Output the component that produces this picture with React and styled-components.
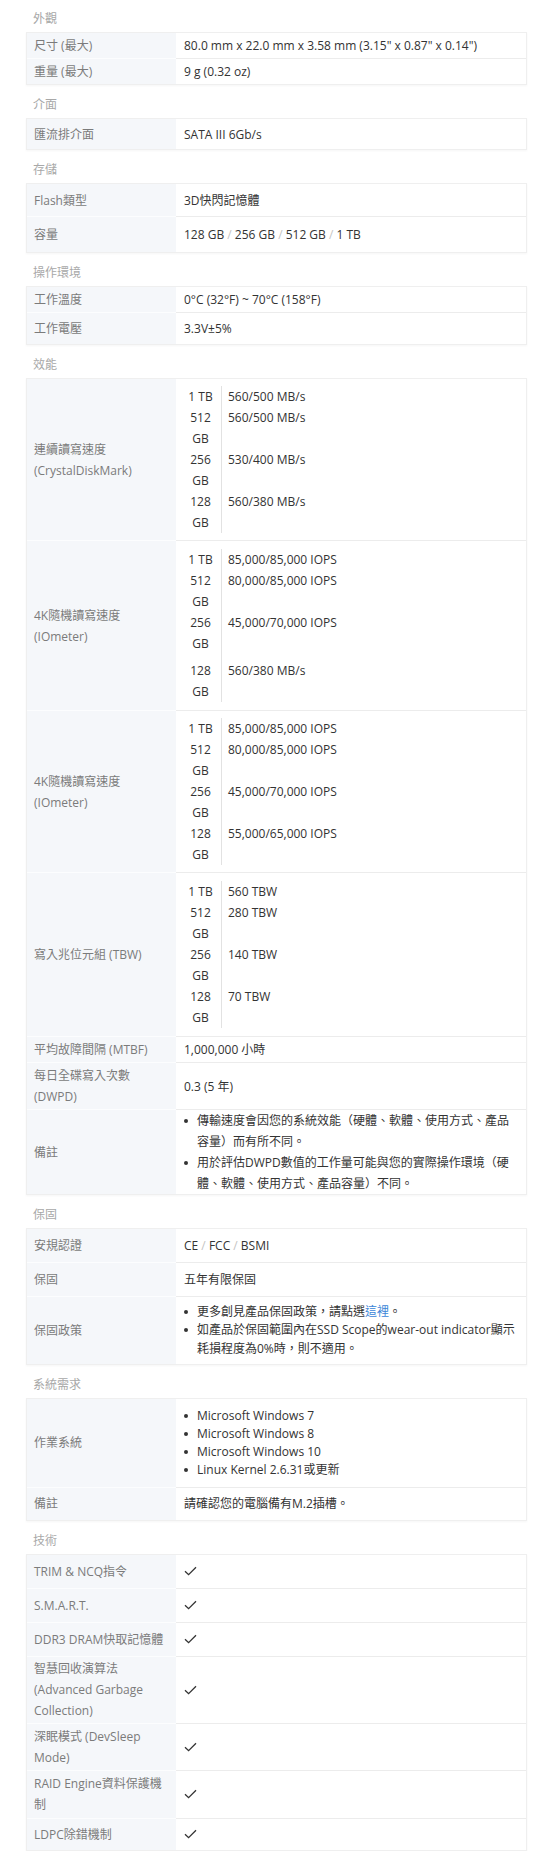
import React from 'react'
import styled, { createGlobalStyle } from 'styled-components'

const GlobalStyle = createGlobalStyle`
  * { box-sizing: border-box; }
  html, body { margin: 0; padding: 0; background: #fff; }
  body {
    font-family: 'Open Sans', 'Noto Sans CJK TC', sans-serif;
    font-size: 12px;
    color: #333;
  }
`

const Check = () => (
  <svg width="13" height="10" viewBox="0 0 13 10">
    <path d="M1 5.2 L4.6 8.7 L12 1.3" fill="none" stroke="#333" strokeWidth="1.3" />
  </svg>
)

const Row = ({ label, pad = 6, children }) => (
  <>
    <Label $pad={pad}>{label}</Label>
    <Value $pad={pad}>{children}</Value>
  </>
)

const Speeds = ({ rows }) => (
  <SpeedGrid>
    {rows.map(([size, speed, gap]) => (
      <React.Fragment key={size}>
        <Size $gap={gap || 0}>{size}</Size>
        <Speed $gap={gap || 0}>{speed}</Speed>
      </React.Fragment>
    ))}
  </SpeedGrid>
)

const Slashed = ({ items }) => (
  <span>
    {items.map((t, i) => (
      <React.Fragment key={t}>
        {i > 0 && <Sep> / </Sep>}
        {t}
      </React.Fragment>
    ))}
  </span>
)

const App = () => {
  return (
    <Page>
      <GlobalStyle />

      <Heading $first>外觀</Heading>
      <Table>
        <Row label="尺寸 (最大)" pad={2}>80.0 mm x 22.0 mm x 3.58 mm (3.15" x 0.87" x 0.14")</Row>
        <Row label="重量 (最大)" pad={2}>9 g (0.32 oz)</Row>
      </Table>

      <Heading>介面</Heading>
      <Table>
        <Row label="匯流排介面" pad={4.5}>SATA III 6Gb/s</Row>
      </Table>

      <Heading>存儲</Heading>
      <Table>
        <Row label="Flash類型" pad={5.5}>3D快閃記憶體</Row>
        <Row label="容量" pad={7}><Slashed items={['128 GB', '256 GB', '512 GB', '1 TB']} /></Row>
      </Table>

      <Heading>操作環境</Heading>
      <Table>
        <Row label="工作溫度" pad={2}>0°C (32°F) ~ 70°C (158°F)</Row>
        <Row label="工作電壓" pad={5}>3.3V±5%</Row>
      </Table>

      <Heading>效能</Heading>
      <Table>
        <Row label="連續讀寫速度 (CrystalDiskMark)" pad={7}>
          <Speeds rows={[
            ['1 TB', '560/500 MB/s'],
            ['512 GB', '560/500 MB/s'],
            ['256 GB', '530/400 MB/s'],
            ['128 GB', '560/380 MB/s'],
          ]} />
        </Row>
        <Row label="4K隨機讀寫速度 (IOmeter)" pad={8}>
          <Speeds rows={[
            ['1 TB', '85,000/85,000 IOPS'],
            ['512 GB', '80,000/85,000 IOPS'],
            ['256 GB', '45,000/70,000 IOPS'],
            ['128 GB', '560/380 MB/s', 6],
          ]} />
        </Row>
        <Row label="4K隨機讀寫速度 (IOmeter)" pad={7}>
          <Speeds rows={[
            ['1 TB', '85,000/85,000 IOPS'],
            ['512 GB', '80,000/85,000 IOPS'],
            ['256 GB', '45,000/70,000 IOPS'],
            ['128 GB', '55,000/65,000 IOPS'],
          ]} />
        </Row>
        <Row label="寫入兆位元組 (TBW)" pad={8}>
          <Speeds rows={[
            ['1 TB', '560 TBW'],
            ['512 GB', '280 TBW'],
            ['256 GB', '140 TBW'],
            ['128 GB', '70 TBW'],
          ]} />
        </Row>
        <Row label="平均故障間隔 (MTBF)" pad={2}>1,000,000 小時</Row>
        <Row label="每日全碟寫入次數 (DWPD)" pad={2}>0.3 (5 年)</Row>
        <Row label="備註" pad={0}>
          <List $lh={21}>
            <Item $lh={21}>傳輸速度會因您的系統效能（硬體、軟體、使用方式、產品容量）而有所不同。</Item>
            <Item $lh={21}>用於評估DWPD數值的工作量可能與您的實際操作環境（硬體、軟體、使用方式、產品容量）不同。</Item>
          </List>
        </Row>
      </Table>

      <Heading>保固</Heading>
      <Table>
        <Row label="安規認證" pad={6}><Slashed items={['CE', 'FCC', 'BSMI']} /></Row>
        <Row label="保固" pad={6}>五年有限保固</Row>
        <Row label="保固政策" pad={5.5}>
          <List $lh={18.5}>
            <Item $lh={18.5}>更多創見產品保固政策，請點選<Link>這裡</Link>。</Item>
            <Item $lh={18.5}>如產品於保固範圍內在SSD Scope的wear-out indicator顯示耗損程度為0%時，則不適用。</Item>
          </List>
        </Row>
      </Table>

      <Heading>系統需求</Heading>
      <Table>
        <Row label="作業系統" pad={8}>
          <List $lh={18}>
            <Item $lh={18}>Microsoft Windows 7</Item>
            <Item $lh={18}>Microsoft Windows 8</Item>
            <Item $lh={18}>Microsoft Windows 10</Item>
            <Item $lh={18}>Linux Kernel 2.6.31或更新</Item>
          </List>
        </Row>
        <Row label="備註" pad={5.5}>請確認您的電腦備有M.2插槽。</Row>
      </Table>

      <Heading>技術</Heading>
      <Table>
        <Row label="TRIM & NCQ指令" pad={6}><Check /></Row>
        <Row label="S.M.A.R.T." pad={6}><Check /></Row>
        <Row label="DDR3 DRAM快取記憶體" pad={6}><Check /></Row>
        <Row label="智慧回收演算法 (Advanced Garbage Collection)" pad={1.5}><Check /></Row>
        <Row label="深眠模式 (DevSleep Mode)" pad={2}><Check /></Row>
        <Row label="RAID Engine資料保護機制" pad={2.5}><Check /></Row>
        <Row label="LDPC除錯機制" pad={5}><Check /></Row>
      </Table>
    </Page>
  )
}

export default App

const Page = styled.div`
  padding: 0 27px 0 26px;
`

const Heading = styled.div`
  padding: ${p => (p.$first ? 8 : 9)}px 7px 3px;
  line-height: 21px;
  color: #a8a8a8;
`

const Table = styled.div`
  display: grid;
  grid-template-columns: 149px 1fr;
  border: 1px solid #efefef;
  box-shadow: 0 1px 2px rgba(0, 0, 0, 0.04);

  & > :nth-child(-n + 2) {
    border-top: none;
  }
`

const Label = styled.div`
  display: flex;
  align-items: center;
  background: #f5f7fa;
  color: #7b7b7b;
  line-height: 21px;
  padding: ${p => p.$pad}px 8px ${p => p.$pad}px 7px;
  border-top: 1px solid #fcfdfe;
`

const Value = styled.div`
  display: flex;
  align-items: center;
  line-height: 21px;
  padding: ${p => p.$pad}px 10px ${p => p.$pad}px 8px;
  border-top: 1px solid #ececec;
`

const SpeedGrid = styled.div`
  display: grid;
  grid-template-columns: 38px 1fr;
  align-self: stretch;
`

const Size = styled.div`
  text-align: center;
  padding: ${p => p.$gap}px 4px 0 0;
  border-right: 1px solid #e2e2e2;
`

const Speed = styled.div`
  padding: ${p => p.$gap}px 0 0 6px;
`

const Sep = styled.span`
  color: #c4c4c4;
`

const List = styled.ul`
  margin: 0;
  padding: 0;
  list-style: none;
  line-height: ${p => p.$lh}px;
`

const Item = styled.li`
  position: relative;
  padding-left: 13px;

  &::before {
    content: '';
    position: absolute;
    left: 0;
    top: ${p => p.$lh / 2 - 2}px;
    width: 4px;
    height: 4px;
    border-radius: 50%;
    background: #333;
  }
`

const Link = styled.span`
  color: #3b86d8;
`
